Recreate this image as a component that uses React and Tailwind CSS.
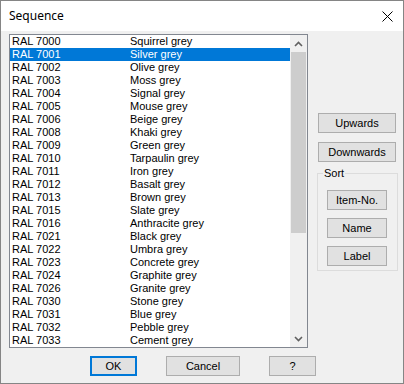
import React from "react";

const ITEMS = [
  ["RAL 7000", "Squirrel grey"],
  ["RAL 7001", "Silver grey"],
  ["RAL 7002", "Olive grey"],
  ["RAL 7003", "Moss grey"],
  ["RAL 7004", "Signal grey"],
  ["RAL 7005", "Mouse grey"],
  ["RAL 7006", "Beige grey"],
  ["RAL 7008", "Khaki grey"],
  ["RAL 7009", "Green grey"],
  ["RAL 7010", "Tarpaulin grey"],
  ["RAL 7011", "Iron grey"],
  ["RAL 7012", "Basalt grey"],
  ["RAL 7013", "Brown grey"],
  ["RAL 7015", "Slate grey"],
  ["RAL 7016", "Anthracite grey"],
  ["RAL 7021", "Black grey"],
  ["RAL 7022", "Umbra grey"],
  ["RAL 7023", "Concrete grey"],
  ["RAL 7024", "Graphite grey"],
  ["RAL 7026", "Granite grey"],
  ["RAL 7030", "Stone grey"],
  ["RAL 7031", "Blue grey"],
  ["RAL 7032", "Pebble grey"],
  ["RAL 7033", "Cement grey"],
];

const SELECTED = 1;

// plain win32-style push button
function Btn({ children, className = "", focused = false }) {
  return (
    <div
      className={`flex h-[20px] items-center justify-center bg-[#e1e1e1] text-[11px] leading-none text-black ${
        focused ? "border-2 border-[#0078d7]" : "border border-[#adadad]"
      } ${className}`}
    >
      {children}
    </div>
  );
}

function Chevron({ up }) {
  return (
    <svg width="9" height="6" viewBox="0 0 9 6">
      <path
        d={up ? "M1 5 L4.5 1.5 L8 5" : "M1 1 L4.5 4.5 L8 1"}
        fill="none"
        stroke="#606060"
        strokeWidth="1.6"
      />
    </svg>
  );
}

export default function App() {
  return (
    <div
      className="flex h-[384px] w-[404px] flex-col border border-[#858585] bg-[#f0f0f0] text-black"
      style={{ fontFamily: '"Liberation Sans", Arial, sans-serif' }}
    >
      {/* title bar */}
      <div className="flex h-[30px] items-center justify-between bg-white pl-[8px] pr-[10px]">
        <span className="text-[12px]" style={{ fontFamily: '"Noto Sans", sans-serif' }}>
          Sequence
        </span>
        <svg width="11" height="11" viewBox="0 0 11 11">
          <path d="M0.5 0.5 L10.5 10.5 M10.5 0.5 L0.5 10.5" stroke="#000" strokeWidth="1" />
        </svg>
      </div>

      <div className="flex pl-2 pt-[3px]">
        {/* list box */}
        <div className="flex h-[314px] w-[299px] border border-[#828790] bg-white">
          <div className="w-[280px] pt-[0px]">
            {ITEMS.map(([code, name], i) => (
              <div
                key={code}
                className={`flex h-[13px] items-center pl-[2px] text-[11px] leading-[13px] ${
                  i === SELECTED ? "bg-[#0078d7] text-white" : ""
                }`}
              >
                <span className="w-[118px]">{code}</span>
                <span>{name}</span>
              </div>
            ))}
          </div>
          {/* scroll bar */}
          <div className="flex w-[17px] flex-col bg-[#f0f0f0]">
            <div className="flex h-[17px] items-center justify-center">
              <Chevron up />
            </div>
            <div className="mx-[1px] h-[181px] bg-[#cdcdcd]" />
            <div className="flex-1" />
            <div className="flex h-[17px] items-center justify-center">
              <Chevron />
            </div>
          </div>
        </div>

        {/* right side */}
        <div className="ml-[10px] flex w-[78px] flex-col pt-[79px]">
          <Btn>Upwards</Btn>
          <Btn className="mt-[9px]">Downwards</Btn>
          <div className="relative -ml-px mt-[11px] h-[98px] w-[81px] border border-[#dcdcdc] pl-[9px] pt-[16px]">
            <span className="absolute -top-[7px] left-[5px] bg-[#f0f0f0] px-[1px] text-[11px] leading-[13px]">
              Sort
            </span>
            <Btn className="w-[60px]">Item-No.</Btn>
            <Btn className="mt-[8px] w-[60px]">Name</Btn>
            <Btn className="mt-[8px] w-[60px]">Label</Btn>
          </div>
        </div>
      </div>

      {/* dialog buttons */}
      <div className="mt-[8px] flex">
        <Btn focused className="ml-[89px] w-[47px]">OK</Btn>
        <Btn className="ml-[29px] w-[74px]">Cancel</Btn>
        <Btn className="ml-[29px] w-[47px]">?</Btn>
      </div>
    </div>
  );
}
